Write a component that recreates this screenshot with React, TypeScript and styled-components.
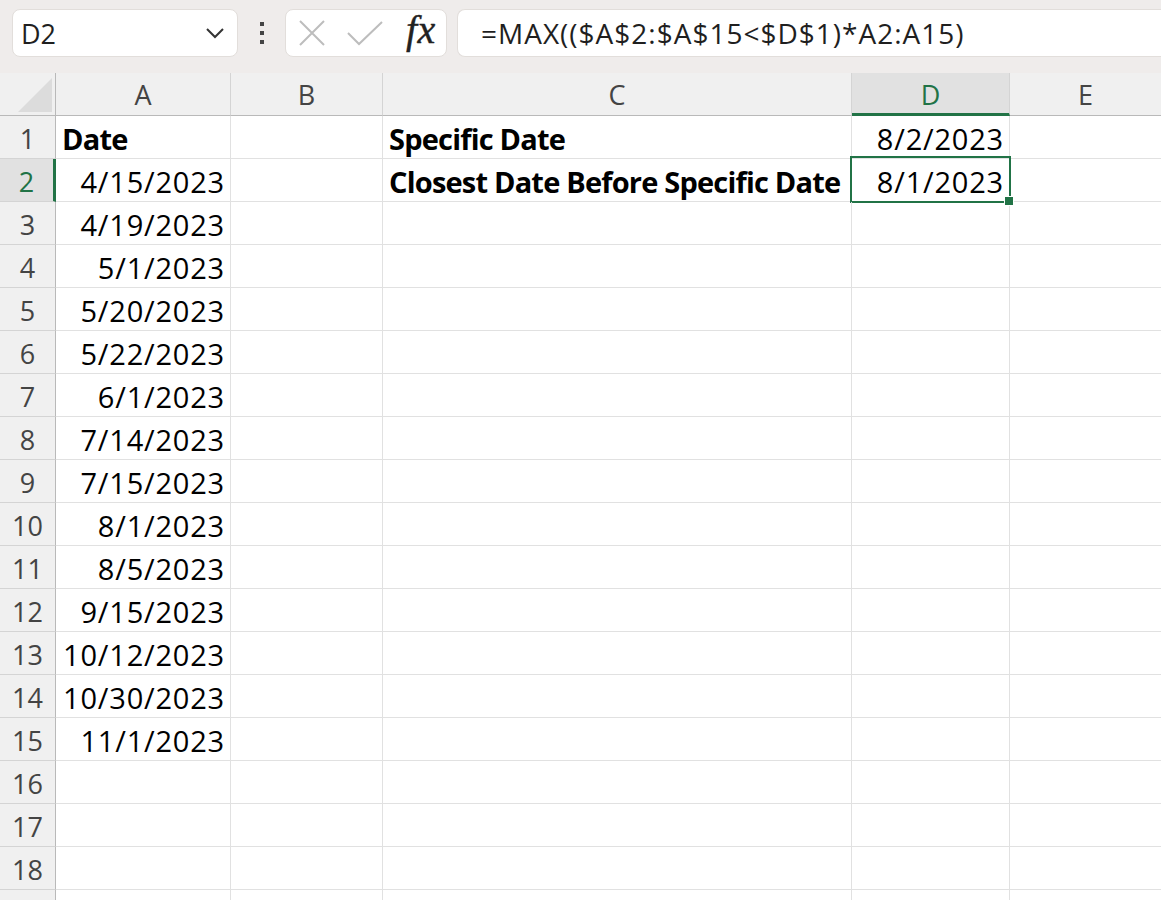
import React from "react";
import styled, { createGlobalStyle } from "styled-components";

const GREEN = "#217346";

const GlobalStyle = createGlobalStyle`
  html, body {
    margin: 0;
    padding: 0;
    background: #ffffff;
    overflow: hidden;
  }
  body {
    font-family: "Open Sans", "Liberation Sans", sans-serif;
  }
`;

const Page = styled.div`
  width: 1161px;
  height: 900px;
  overflow: hidden;
  display: flex;
  flex-direction: column;
`;

const Toolbar = styled.div`
  height: 73px;
  flex: 0 0 73px;
  background: #efeceb;
  display: flex;
  align-items: flex-start;
  padding: 9px 0 0 12px;
  box-sizing: border-box;
`;

const NameBox = styled.div`
  width: 226px;
  height: 48px;
  box-sizing: border-box;
  background: #fff;
  border: 1px solid #e2dedb;
  border-radius: 8px;
  display: flex;
  align-items: center;
  justify-content: space-between;
  padding: 0 12px 0 8px;
  font-size: 27px;
  color: #1f1f1f;
`;

const Dots = styled.div`
  width: 47px;
  height: 48px;
  display: flex;
  flex-direction: column;
  align-items: center;
  justify-content: center;
  gap: 5px;

  span {
    width: 4px;
    height: 4px;
    background: #444;
  }
`;

const ButtonGroup = styled.div`
  width: 162px;
  height: 48px;
  box-sizing: border-box;
  background: #fff;
  border: 1px solid #e2dedb;
  border-radius: 8px;
  display: flex;
  align-items: center;
  padding: 0 8px 0 12px;
  gap: 21px;
`;

const Fx = styled.span`
  font-family: "Liberation Serif", "DejaVu Serif", serif;
  font-style: italic;
  font-size: 40px;
  color: #222;
  line-height: 1;
  margin-top: -6px;
  margin-left: 2px;
  letter-spacing: 0.5px;
  -webkit-text-stroke: 0.4px #222;
`;

const FormulaBox = styled.div`
  flex: 1;
  margin-left: 10px;
  height: 48px;
  box-sizing: border-box;
  background: #fff;
  border: 1px solid #e2dedb;
  border-right: none;
  border-radius: 8px 0 0 8px;
  display: flex;
  align-items: center;
  padding-left: 23px;
  font-size: 28px;
  letter-spacing: 1px;
  color: #1f1f1f;
  white-space: nowrap;
`;

const Sheet = styled.div`
  display: grid;
  grid-template-columns: 56px 175px 152px 469px 158px 152px;
  grid-auto-rows: 43px;
`;

const HeaderCell = styled.div<{ $active?: boolean }>`
  background: ${(p) => (p.$active ? "#e1e1e1" : "#f0f0f0")};
  border-right: 1px solid #d4d4d4;
  border-bottom: ${(p) => (p.$active ? `3px solid ${GREEN}` : "1px solid #b9b9b9")};
  box-sizing: border-box;
  display: flex;
  align-items: center;
  justify-content: center;
  font-size: 27px;
  color: ${(p) => (p.$active ? GREEN : "#444")};
  padding-top: ${(p) => (p.$active ? "2px" : "0")};
`;

const Corner = styled.div`
  background: #f0f0f0;
  border-right: 1px solid #b9b9b9;
  border-bottom: 1px solid #b9b9b9;
  box-sizing: border-box;
  position: relative;

  &::after {
    content: "";
    position: absolute;
    right: 3px;
    bottom: 3px;
    width: 0;
    height: 0;
    border-left: 34px solid transparent;
    border-bottom: 34px solid #dcdcdc;
  }
`;

const RowHeader = styled.div<{ $active?: boolean }>`
  background: ${(p) => (p.$active ? "#e1e1e1" : "#f0f0f0")};
  border-right: ${(p) => (p.$active ? `3px solid ${GREEN}` : "1px solid #b9b9b9")};
  border-bottom: 1px solid #d4d4d4;
  box-sizing: border-box;
  display: flex;
  align-items: center;
  justify-content: center;
  font-size: 27px;
  color: ${(p) => (p.$active ? GREEN : "#444")};
  padding-top: 2px;
`;

const Cell = styled.div<{ $align?: "left" | "right"; $bold?: boolean; $selected?: boolean }>`
  position: relative;
  border-right: 1px solid #e1e1e1;
  border-bottom: 1px solid #e1e1e1;
  box-sizing: border-box;
  display: flex;
  align-items: center;
  justify-content: ${(p) => (p.$align === "right" ? "flex-end" : "flex-start")};
  padding: 3px 5px 0 6px;
  font-size: 29px;
  font-weight: ${(p) => (p.$bold ? 700 : 400)};
  letter-spacing: ${(p) => (p.$bold ? "-0.8px" : "0.8px")};
  color: #000;
  white-space: nowrap;
  overflow: visible;

  ${(p) =>
    p.$selected &&
    `
    &::before {
      content: "";
      position: absolute;
      left: -2px;
      top: -3px;
      right: -2px;
      bottom: -2px;
      border: 2.5px solid ${GREEN};
      pointer-events: none;
    }
    &::after {
      content: "";
      position: absolute;
      right: -5px;
      bottom: -5px;
      width: 8px;
      height: 8px;
      background: ${GREEN};
      border: 1px solid #fff;
      z-index: 2;
    }
  `}
`;

const Chevron = () => (
  <svg width="20" height="12" viewBox="0 0 20 12">
    <path d="M2 2 L10 10 L18 2" fill="none" stroke="#333" strokeWidth="2" />
  </svg>
);

const CancelIcon = () => (
  <svg width="28" height="28" viewBox="0 0 28 28">
    <path d="M2 2 L26 26 M26 2 L2 26" stroke="#bdbdbd" strokeWidth="2" fill="none" />
  </svg>
);

const CheckIcon = () => (
  <svg width="36" height="26" viewBox="0 0 36 26">
    <path d="M1 13 L12 24 L35 2" stroke="#bdbdbd" strokeWidth="2" fill="none" />
  </svg>
);

const columns = ["A", "B", "C", "D", "E"];

const colA = [
  "Date",
  "4/15/2023",
  "4/19/2023",
  "5/1/2023",
  "5/20/2023",
  "5/22/2023",
  "6/1/2023",
  "7/14/2023",
  "7/15/2023",
  "8/1/2023",
  "8/5/2023",
  "9/15/2023",
  "10/12/2023",
  "10/30/2023",
  "11/1/2023",
];

const colC: Record<number, string> = {
  1: "Specific Date",
  2: "Closest Date Before Specific Date",
};

const colD: Record<number, string> = {
  1: "8/2/2023",
  2: "8/1/2023",
};

export default function App() {
  const rows = Array.from({ length: 19 }, (_, i) => i + 1);
  return (
    <Page>
      <GlobalStyle />
      <Toolbar>
        <NameBox>
          <span>D2</span>
          <Chevron />
        </NameBox>
        <Dots>
          <span />
          <span />
          <span />
        </Dots>
        <ButtonGroup>
          <CancelIcon />
          <CheckIcon />
          <Fx>fx</Fx>
        </ButtonGroup>
        <FormulaBox>=MAX(($A$2:$A$15&lt;$D$1)*A2:A15)</FormulaBox>
      </Toolbar>
      <Sheet>
        <Corner />
        {columns.map((c) => (
          <HeaderCell key={c} $active={c === "D"}>
            {c}
          </HeaderCell>
        ))}
        {rows.map((r) => (
          <React.Fragment key={r}>
            <RowHeader $active={r === 2}>{r <= 18 ? r : ""}</RowHeader>
            <Cell $align={r === 1 ? "left" : "right"} $bold={r === 1}>
              {colA[r - 1] ?? ""}
            </Cell>
            <Cell />
            <Cell $bold>{colC[r] ?? ""}</Cell>
            <Cell $align="right" $selected={r === 2}>
              {colD[r] ?? ""}
            </Cell>
            <Cell />
          </React.Fragment>
        ))}
      </Sheet>
    </Page>
  );
}
